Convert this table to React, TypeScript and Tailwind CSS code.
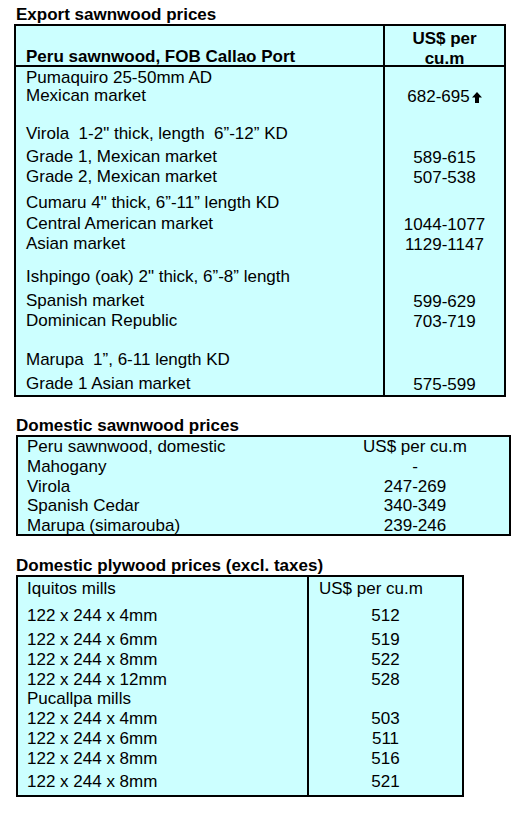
import React from "react";

type Row = { label: string; value?: string; h: string; arrow?: boolean };

const exportRows: Row[] = [
  { label: "Pumaquiro 25-50mm AD", h: "h-[18px]" },
  { label: "Mexican market", value: "682-695", arrow: true, h: "h-[38px]" },
  { label: "Virola  1-2\" thick, length  6\u201d-12\u201d KD", h: "h-[23px]" },
  { label: "Grade 1, Mexican market", value: "589-615", h: "h-[20px]" },
  { label: "Grade 2, Mexican market", value: "507-538", h: "h-[26px]" },
  { label: "Cumaru 4\" thick, 6\u201d-11\u201d length KD", h: "h-[21px]" },
  { label: "Central American market", value: "1044-1077", h: "h-[20px]" },
  { label: "Asian market", value: "1129-1147", h: "h-[33px]" },
  { label: "Ishpingo (oak) 2\" thick, 6\u201d-8\u201d length", h: "h-[24px]" },
  { label: "Spanish market", value: "599-629", h: "h-[20px]" },
  { label: "Dominican Republic", value: "703-719", h: "h-[39px]" },
  { label: "Marupa  1\u201d, 6-11 length KD", h: "h-[24px]" },
  { label: "Grade 1 Asian market", value: "575-599", h: "h-[22px]" },
];

const domesticRows: Row[] = [
  { label: "Peru sawnwood, domestic", value: "US$ per cu.m", h: "h-[20px]" },
  { label: "Mahogany", value: "-", h: "h-[20px]" },
  { label: "Virola", value: "247-269", h: "h-[19px]" },
  { label: "Spanish Cedar", value: "340-349", h: "h-[20px]" },
  { label: "Marupa (simarouba)", value: "239-246", h: "h-[18px]" },
];

const plywoodRows: Row[] = [
  { label: "122 x 244 x 4mm", value: "512", h: "h-[24px]" },
  { label: "122 x 244 x 6mm", value: "519", h: "h-[20px]" },
  { label: "122 x 244 x 8mm", value: "522", h: "h-[20px]" },
  { label: "122 x 244 x 12mm", value: "528", h: "h-[19px]" },
  { label: "Pucallpa mills", value: "", h: "h-[20px]" },
  { label: "122 x 244 x 4mm", value: "503", h: "h-[20px]" },
  { label: "122 x 244 x 6mm", value: "511", h: "h-[20px]" },
  { label: "122 x 244 x 8mm", value: "516", h: "h-[23px]" },
  { label: "122 x 244 x 8mm", value: "521", h: "h-[25px]" },
];

const UpArrow = () => (
  <svg width="10" height="11" viewBox="0 0 10 11" className="ml-[2px] mb-[4px]">
    <polygon points="5,0 10,5.5 7,5.5 7,11 3,11 3,5.5 0,5.5" fill="#000" />
  </svg>
);

export default function App() {
  return (
    <div className="w-[519px] h-[813px] bg-white text-black font-['Liberation_Sans',Arial,sans-serif] text-[17px] leading-[20px] pt-[5px]">
      {/* export prices */}
      <h2 className="pl-[16px] font-bold leading-[19px]">Export sawnwood prices</h2>
      <div className="ml-[14px] w-[492px] border-2 border-black bg-[#ccffff]">
        <div className="grid grid-cols-[367px_1fr] h-[41px] border-b-2 border-black font-bold">
          <div className="pl-[10px] pt-[21px] whitespace-nowrap">Peru sawnwood, FOB Callao Port</div>
          <div className="border-l-2 border-black pt-[3px] text-center">
            <div>US$ per</div>
            <div>cu.m</div>
          </div>
        </div>
        {exportRows.map((r, i) => (
          <div key={i} className={`grid grid-cols-[367px_1fr] ${r.h}`}>
            <div className="pl-[10px] pt-[1px] whitespace-pre">{r.label}</div>
            <div className="border-l-2 border-black pt-[1px] flex justify-center items-end h-full">
              {r.value ? (
                <div className="flex items-end h-[20px] mt-[1px] self-start">
                  <span>{r.value}</span>
                  {r.arrow && <UpArrow />}
                </div>
              ) : null}
            </div>
          </div>
        ))}
      </div>

      {/* domestic sawnwood */}
      <h2 className="mt-[19px] pl-[16px] font-bold leading-[19px]">Domestic sawnwood prices</h2>
      <div className="ml-[16px] w-[495px] border-2 border-black bg-[#ccffff]">
        {domesticRows.map((r, i) => (
          <div key={i} className={`grid grid-cols-[303px_1fr] ${r.h}`}>
            <div className="pl-[9px] whitespace-nowrap">{r.label}</div>
            <div className="text-center whitespace-nowrap">{r.value}</div>
          </div>
        ))}
      </div>

      {/* plywood */}
      <h2 className="mt-[21px] pl-[16px] font-bold leading-[18px]">Domestic plywood prices (excl. taxes)</h2>
      <div className="ml-[16px] w-[448px] border-2 border-black bg-[#ccffff]">
        <div className="grid grid-cols-[289px_1fr] h-[27px]">
          <div className="pl-[9px] pt-[2px]">Iquitos mills</div>
          <div className="border-l-2 border-black pl-[10px] pt-[2px] whitespace-nowrap">US$ per cu.m</div>
        </div>
        {plywoodRows.map((r, i) => (
          <div key={i} className={`grid grid-cols-[289px_1fr] ${r.h}`}>
            <div className="pl-[9px] pt-[2px] whitespace-nowrap">{r.label}</div>
            <div className="border-l-2 border-black pt-[2px] text-center">{r.value}</div>
          </div>
        ))}
      </div>
    </div>
  );
}
